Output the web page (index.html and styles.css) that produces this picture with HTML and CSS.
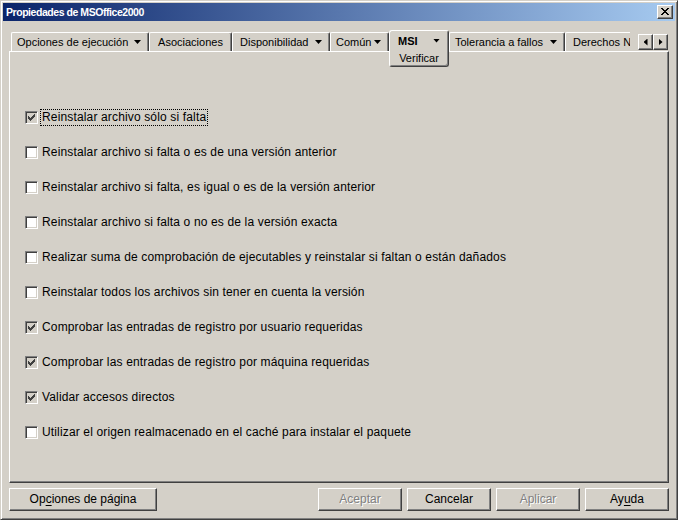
FILE: index.html
```html
<!DOCTYPE html>
<html>
<head>
<meta charset="utf-8">
<link rel="stylesheet" href="styles.css">
</head>
<body>
<div class="window">
  <div class="titlebar">
    <span class="title">Propiedades de MSOffice2000</span>
    <span class="close"><svg width="8" height="7" viewBox="0 0 8 7" shape-rendering="crispEdges"><path d="M0 0h2v1H0zM6 0h2v1H6zM1 1h2v1H1zM5 1h2v1H5zM2 2h4v1H2zM3 3h2v1H3zM2 4h4v1H2zM1 5h2v1H1zM5 5h2v1H5zM0 6h2v1H0zM6 6h2v1H6z" fill="#000"/></svg></span>
  </div>
  <div class="tabrow">
    <div class="tabs">
      <div class="tab tab-opc"><span>Opciones de ejecución</span><i class="arrow"></i></div>
      <div class="tab tab-aso"><span>Asociaciones</span></div>
      <div class="tab tab-dis"><span>Disponibilidad</span><i class="arrow"></i></div>
      <div class="tab tab-com"><span>Común</span><i class="arrow"></i></div>
      <div class="tab-active">
        <div class="tab-line"><b>MSI</b><i class="arrow"></i></div>
        <div class="sub">Verificar</div>
      </div>
      <div class="tab tab-tol"><span>Tolerancia a fallos</span><i class="arrow"></i></div>
      <div class="tab tab-der"><span>Derechos NDS</span></div>
    </div>
    <div class="scroller">
      <span class="sbtn"><i class="tri-left"></i></span><span class="sbtn"><i class="tri-right"></i></span>
    </div>
  </div>
  <div class="panel">
    <div class="row"><span class="cb checked"><svg width="11" height="11" viewBox="0 0 11 11" shape-rendering="crispEdges"><path d="M2 4h1v3H2zM3 5h1v3H3zM4 6h1v3H4zM5 5h1v3H5zM6 4h1v3H6zM7 3h1v3H7zM8 2h1v3H8z"/></svg></span><span class="label focus">Reinstalar archivo sólo si falta</span></div>
    <div class="row"><span class="cb"></span><span class="label">Reinstalar archivo si falta o es de una versión anterior</span></div>
    <div class="row"><span class="cb"></span><span class="label">Reinstalar archivo si falta, es igual o es de la versión anterior</span></div>
    <div class="row"><span class="cb"></span><span class="label">Reinstalar archivo si falta o no es de la versión exacta</span></div>
    <div class="row"><span class="cb"></span><span class="label">Realizar suma de comprobación de ejecutables y reinstalar si faltan o están dañados</span></div>
    <div class="row"><span class="cb"></span><span class="label">Reinstalar todos los archivos sin tener en cuenta la versión</span></div>
    <div class="row"><span class="cb checked"><svg width="11" height="11" viewBox="0 0 11 11" shape-rendering="crispEdges"><path d="M2 4h1v3H2zM3 5h1v3H3zM4 6h1v3H4zM5 5h1v3H5zM6 4h1v3H6zM7 3h1v3H7zM8 2h1v3H8z"/></svg></span><span class="label">Comprobar las entradas de registro por usuario requeridas</span></div>
    <div class="row"><span class="cb checked"><svg width="11" height="11" viewBox="0 0 11 11" shape-rendering="crispEdges"><path d="M2 4h1v3H2zM3 5h1v3H3zM4 6h1v3H4zM5 5h1v3H5zM6 4h1v3H6zM7 3h1v3H7zM8 2h1v3H8z"/></svg></span><span class="label">Comprobar las entradas de registro por máquina requeridas</span></div>
    <div class="row"><span class="cb checked"><svg width="11" height="11" viewBox="0 0 11 11" shape-rendering="crispEdges"><path d="M2 4h1v3H2zM3 5h1v3H3zM4 6h1v3H4zM5 5h1v3H5zM6 4h1v3H6zM7 3h1v3H7zM8 2h1v3H8z"/></svg></span><span class="label">Validar accesos directos</span></div>
    <div class="row"><span class="cb"></span><span class="label">Utilizar el origen realmacenado en el caché para instalar el paquete</span></div>
  </div>
  <div class="buttons">
    <span class="btn btn-wide">Op<u>c</u>iones de página</span>
    <span class="spacer"></span>
    <div class="btn-group">
      <span class="btn disabled">Aceptar</span>
      <span class="btn">Cancelar</span>
      <span class="btn disabled">Aplicar</span>
      <span class="btn">Ay<u>u</u>da</span>
    </div>
  </div>
</div>
</body>
</html>
```
FILE: styles.css
```css
html, body {
  margin: 0;
  padding: 0;
}
body {
  width: 678px;
  height: 520px;
  background: #d4d0c8;
  font-family: "Liberation Sans", Arial, sans-serif;
  font-size: 12px;
  color: #000;
  overflow: hidden;
}
.window {
  width: 678px;
  height: 520px;
  box-sizing: border-box;
  border: 1px solid;
  border-color: #d4d0c8 #404040 #404040 #d4d0c8;
  box-shadow: inset 1px 1px #fff, inset -1px -1px #808080;
  padding: 2px;
  display: flex;
  flex-direction: column;
}
.titlebar {
  height: 18px;
  flex: none;
  display: flex;
  align-items: center;
  justify-content: space-between;
  padding: 0 2px 0 3px;
  background: linear-gradient(to right, #0a246a, #a6caf0);
}
.title {
  color: #fff;
  font-weight: bold;
  font-size: 10.5px;
  letter-spacing: -0.45px;
}
.close {
  width: 16px;
  height: 14px;
  box-sizing: border-box;
  background: #d4d0c8;
  border: 1px solid;
  border-color: #fff #404040 #404040 #fff;
  box-shadow: inset -1px -1px #808080;
  display: flex;
  align-items: center;
  justify-content: center;
  padding: 0 1px 1px 0;
}
.close svg { display: block; }

/* tabs */
.tabrow {
  height: 21px;
  flex: none;
  margin: 9px 6px 0 8px;
  display: flex;
  align-items: flex-start;
}
.tabs {
  width: 619px;
  height: 21px;
  flex: none;
  display: flex;
  align-items: flex-start;
  overflow-x: clip;
  overflow-y: visible;
  font-size: 11px;
}
.tab {
  flex: none;
  margin-top: 2px;
  height: 19px;
  box-sizing: border-box;
  border-top: 1px solid #fff;
  border-left: 1px solid #fff;
  border-right: 1px solid #404040;
  border-radius: 2px 2px 0 0;
  box-shadow: inset -1px 0 #808080;
  display: flex;
  align-items: center;
  padding: 0 7px 0 5px;
  white-space: nowrap;
}
.tab-opc { width: 138px; }
.tab-aso { width: 83px; justify-content: center; padding: 0; }
.tab-dis { width: 98px; padding-left: 7px; }
.tab-com { width: 59px; padding-left: 5px; }
.tab-tol { width: 116px; padding-left: 5px; }
.tab-der { width: 90px; padding-left: 7px; }
.arrow {
  display: block;
  flex: none;
  width: 7px;
  height: 4px;
  background: #000;
  clip-path: polygon(0 0, 100% 0, 50% 100%);
  margin-left: auto;
}
.tab-active {
  flex: none;
  position: relative;
  z-index: 2;
  width: 60px;
  height: 37px;
  box-sizing: border-box;
  background: #d4d0c8;
  border: 1px solid;
  border-color: #fff #404040 #404040 #fff;
  border-radius: 3px;
  box-shadow: inset -1px -1px #808080;
  padding: 2px 0 0 0;
}
.tab-line {
  display: flex;
  align-items: center;
  height: 15px;
  padding: 0 8px;
}
.sub {
  text-align: center;
  margin-top: 3px;
  line-height: 14px;
}
.scroller {
  display: flex;
  margin-left: 8px;
  margin-top: 4px;
}
.sbtn {
  width: 15px;
  height: 16px;
  box-sizing: border-box;
  border: 1px solid;
  border-color: #fff #404040 #404040 #fff;
  box-shadow: inset -1px -1px #808080;
  display: flex;
  align-items: center;
  justify-content: center;
}
.tri-left, .tri-right {
  display: block;
  width: 4px;
  height: 7px;
  background: #000;
}
.tri-left { clip-path: polygon(100% 0, 100% 100%, 0 50%); }
.tri-right { clip-path: polygon(0 0, 0 100%, 100% 50%); }

/* panel */
.panel {
  flex: none;
  height: 432px;
  margin: 0 6px;
  box-sizing: border-box;
  border: 1px solid;
  border-color: #fff #404040 #404040 #fff;
  box-shadow: inset -1px -1px #808080;
  padding: 57px 0 0 15px;
  display: flex;
  flex-direction: column;
  gap: 18px;
}
.row {
  height: 17px;
  display: flex;
  align-items: center;
}
.cb {
  width: 13px;
  height: 13px;
  flex: none;
  box-sizing: border-box;
  border: 1px solid;
  border-color: #808080 #fff #fff #808080;
  box-shadow: inset 1px 1px #404040, inset -1px -1px #d4d0c8;
  background: #fff;
}
.cb.checked { background: #d4d0c8; }
.cb svg { display: block; fill: #404040; }
.label {
  margin-left: 2px;
  padding: 0 1px;
  border: 1px dotted transparent;
  line-height: 15px;
  white-space: nowrap;
  letter-spacing: 0.15px;
}
.label.focus { border-color: #000; }

/* buttons */
.buttons {
  flex: none;
  display: flex;
  margin: 5px 6px 0;
  height: 23px;
}
.spacer { flex: 1; }
.btn-group {
  display: flex;
  gap: 5px;
}
.btn {
  width: 84px;
  height: 23px;
  box-sizing: border-box;
  border: 1px solid;
  border-color: #fff #404040 #404040 #fff;
  box-shadow: inset -1px -1px #808080;
  background: #d4d0c8;
  display: flex;
  align-items: center;
  justify-content: center;
  padding-bottom: 1px;
}
.btn-wide { width: 148px; }
.btn.disabled {
  color: #808080;
  text-shadow: 1px 1px #fff;
}
u { text-decoration: underline; text-underline-offset: 2px; }
```
